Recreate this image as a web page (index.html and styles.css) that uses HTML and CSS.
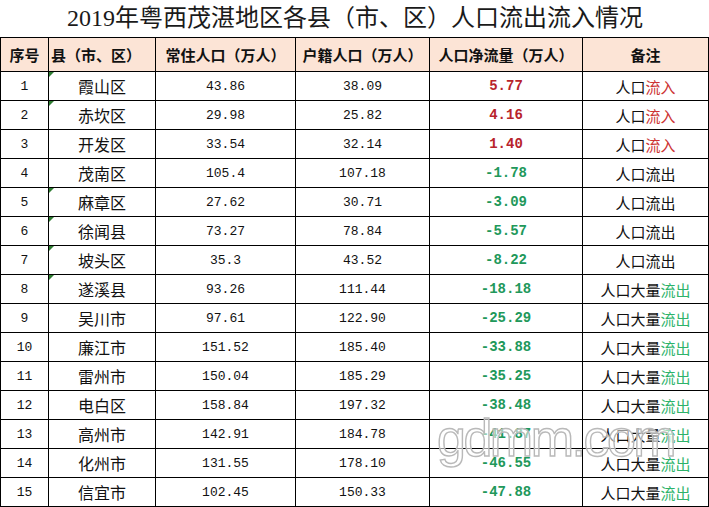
FILE: index.html
```html
<!DOCTYPE html>
<html lang="zh-CN">
<head>
<meta charset="utf-8">
<title>2019年粤西茂湛地区各县（市、区）人口流出流入情况</title>
<link rel="stylesheet" href="styles.css">
</head>
<body>
<div class="sheet">
  <div class="title">2019年粤西茂湛地区各县（市、区）人口流出流入情况</div>
  <table class="grid">
    <colgroup>
      <col class="c-no"><col class="c-name"><col class="c-res"><col class="c-reg"><col class="c-net"><col class="c-note">
    </colgroup>
    <thead>
      <tr class="head">
        <th>序号</th><th class="left">县（市、区）</th><th>常住人口（万人）</th><th>户籍人口（万人）</th><th>人口净流量（万人）</th><th>备注</th>
      </tr>
    </thead>
    <tbody>
      <tr><td class="num">1</td><td class="name mark">霞山区</td><td class="num">43.86</td><td class="num">38.09</td><td class="net in">5.77</td><td class="note">人口<span class="r">流入</span></td></tr>
      <tr><td class="num">2</td><td class="name mark">赤坎区</td><td class="num">29.98</td><td class="num">25.82</td><td class="net in">4.16</td><td class="note">人口<span class="r">流入</span></td></tr>
      <tr><td class="num">3</td><td class="name">开发区</td><td class="num">33.54</td><td class="num">32.14</td><td class="net in">1.40</td><td class="note">人口<span class="r">流入</span></td></tr>
      <tr><td class="num">4</td><td class="name">茂南区</td><td class="num">105.4</td><td class="num">107.18</td><td class="net out">-1.78</td><td class="note">人口流出</td></tr>
      <tr><td class="num">5</td><td class="name mark">麻章区</td><td class="num">27.62</td><td class="num">30.71</td><td class="net out">-3.09</td><td class="note">人口流出</td></tr>
      <tr><td class="num">6</td><td class="name mark">徐闻县</td><td class="num">73.27</td><td class="num">78.84</td><td class="net out">-5.57</td><td class="note">人口流出</td></tr>
      <tr><td class="num">7</td><td class="name mark">坡头区</td><td class="num">35.3</td><td class="num">43.52</td><td class="net out">-8.22</td><td class="note">人口流出</td></tr>
      <tr><td class="num">8</td><td class="name mark">遂溪县</td><td class="num">93.26</td><td class="num">111.44</td><td class="net out">-18.18</td><td class="note">人口大量<span class="g">流出</span></td></tr>
      <tr><td class="num">9</td><td class="name">吴川市</td><td class="num">97.61</td><td class="num">122.90</td><td class="net out">-25.29</td><td class="note">人口大量<span class="g">流出</span></td></tr>
      <tr><td class="num">10</td><td class="name">廉江市</td><td class="num">151.52</td><td class="num">185.40</td><td class="net out">-33.88</td><td class="note">人口大量<span class="g">流出</span></td></tr>
      <tr><td class="num">11</td><td class="name">雷州市</td><td class="num">150.04</td><td class="num">185.29</td><td class="net out">-35.25</td><td class="note">人口大量<span class="g">流出</span></td></tr>
      <tr><td class="num">12</td><td class="name">电白区</td><td class="num">158.84</td><td class="num">197.32</td><td class="net out">-38.48</td><td class="note">人口大量<span class="g">流出</span></td></tr>
      <tr><td class="num">13</td><td class="name">高州市</td><td class="num">142.91</td><td class="num">184.78</td><td class="net out">-41.87</td><td class="note">人口大量<span class="g">流出</span></td></tr>
      <tr><td class="num">14</td><td class="name">化州市</td><td class="num">131.55</td><td class="num">178.10</td><td class="net out">-46.55</td><td class="note">人口大量<span class="g">流出</span></td></tr>
      <tr><td class="num">15</td><td class="name">信宜市</td><td class="num">102.45</td><td class="num">150.33</td><td class="net out">-47.88</td><td class="note">人口大量<span class="g">流出</span></td></tr>
    </tbody>
  </table>
  <div class="watermark">gdmm.com</div>
</div>
</body>
</html>
```

FILE: styles.css
```css
html, body {
  margin: 0;
  padding: 0;
  background: #ffffff;
}

.sheet {
  position: relative;
  width: 709px;
  height: 507px;
  overflow: hidden;
  font-family: "Noto Sans CJK SC", sans-serif;
  color: #111;
}

.title {
  height: 37px;
  line-height: 37px;
  text-align: center;
  font-family: "Liberation Serif", "Noto Sans CJK SC", serif;
  font-size: 24px;
  color: #1a1a1a;
  padding-left: 1px;
}

.grid {
  border-collapse: collapse;
  table-layout: fixed;
  width: 708px;
  margin-left: 0;
}

.c-no { width: 48px; }
.c-name { width: 107px; }
.c-res { width: 140px; }
.c-reg { width: 134px; }
.c-net { width: 153px; }
.c-note { width: 126px; }

.grid th, .grid td {
  border: 1px solid #000;
  padding: 0;
  text-align: center;
  vertical-align: middle;
  white-space: nowrap;
  overflow: hidden;
}

.head th {
  height: 33px;
  background: #fce4d6;
  font-size: 15px;
  font-weight: 700;
  color: #111;
}

.head th.left {
  text-align: left;
  padding-left: 2px;
}

.grid td {
  height: 28px;
}

.num {
  font-family: "Liberation Mono", "DejaVu Sans Mono", monospace;
  font-size: 13px;
  color: #111;
}

.name {
  position: relative;
  font-size: 16px;
  color: #111;
}

.name.mark::before {
  content: "";
  position: absolute;
  left: 0;
  top: 0;
  width: 0;
  height: 0;
  border-top: 5px solid #2e7d32;
  border-right: 5px solid transparent;
}

.net {
  font-family: "Liberation Mono", "DejaVu Sans Mono", monospace;
  font-size: 14px;
  font-weight: 700;
}

.net.in { color: #b8232b; }
.net.out { color: #21985a; }

.note {
  font-size: 15px;
  color: #111;
}

.note .r { color: #cc3333; }
.note .g { color: #2db36a; }

.watermark {
  position: absolute;
  left: 437px;
  top: 412px;
  font-family: "Liberation Sans", sans-serif;
  font-size: 52px;
  line-height: 1;
  color: rgba(255, 255, 255, 0.55);
  -webkit-text-stroke: 1.4px #b9b9b9;
  letter-spacing: -2.5px;
  pointer-events: none;
}
```
